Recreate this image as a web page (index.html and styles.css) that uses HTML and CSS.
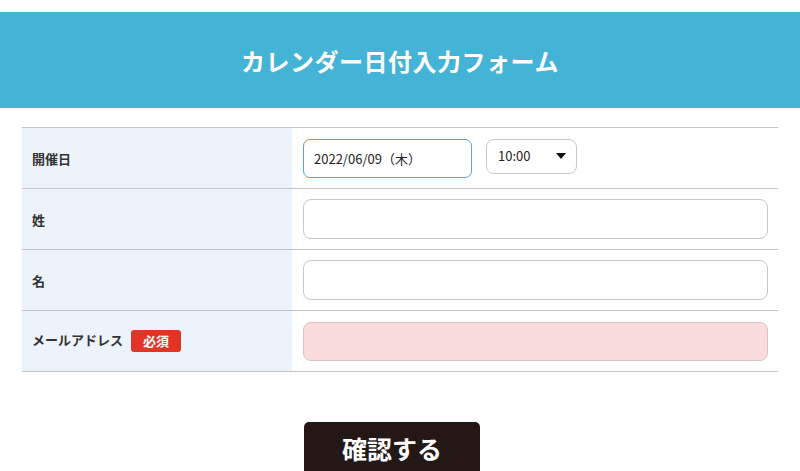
FILE: index.html
```html
<!DOCTYPE html>
<html lang="ja">
<head>
  <meta charset="UTF-8" />
  <title>カレンダー日付入力フォーム</title>
  <link rel="stylesheet" href="styles.css">
</head>
<body>
  <header class="page-header">
    <h1>カレンダー日付入力フォーム</h1>
  </header>

  <form class="form">
    <table class="form-table">
      <tr>
        <th>開催日</th>
        <td>
          <div class="date-row">
            <input type="text" class="date-input" value="2022/06/09（木）" />
            <div class="time-select">
              <span>10:00</span>
              <span class="arrow"></span>
            </div>
          </div>
        </td>
      </tr>
      <tr>
        <th>姓</th>
        <td><input type="text" class="text-input" /></td>
      </tr>
      <tr>
        <th>名</th>
        <td><input type="text" class="text-input" /></td>
      </tr>
      <tr>
        <th>メールアドレス<span class="required">必須</span></th>
        <td><input type="text" class="text-input is-error" /></td>
      </tr>
    </table>

    <div class="actions">
      <button type="button" class="submit">確認する</button>
    </div>
  </form>
</body>
</html>
```

FILE: styles.css
```css
body {
  margin: 0;
  padding-top: 12px;
  font-family: "Noto Sans CJK JP", "Liberation Sans", sans-serif;
  color: #333;
  background: #fff;
}

.page-header {
  background: #43b4d5;
  height: 96px;
  display: flex;
  align-items: center;
  justify-content: center;
}

.page-header h1 {
  margin: 0;
  color: #fff;
  font-size: 24px;
  font-weight: bold;
  letter-spacing: 0.5px;
}

.form {
  padding: 19px 22px 0;
}

.form-table {
  width: 100%;
  border-collapse: collapse;
  border-top: 1px solid #c4c4c4;
}

.form-table tr {
  border-bottom: 1px solid #c4c4c4;
}

.form-table th {
  width: 270px;
  height: 61px;
  padding: 0 0 0 10px;
  box-sizing: border-box;
  background: #edf3fa;
  text-align: left;
  font-size: 13px;
  font-weight: bold;
  color: #333;
  vertical-align: middle;
}

.form-table td {
  padding: 0 10px 0 11px;
  vertical-align: middle;
}

.date-row {
  display: flex;
  align-items: flex-start;
  gap: 14px;
}

.date-input {
  width: 169px;
  height: 39px;
  box-sizing: border-box;
  border: 1px solid #5aa3db;
  border-radius: 7px;
  padding: 0 10px;
  font-family: "Noto Sans CJK JP", "Liberation Sans", sans-serif;
  font-size: 13px;
  color: #222;
}

.time-select {
  width: 91px;
  height: 35px;
  box-sizing: border-box;
  border: 1px solid #c8c8c8;
  border-radius: 8px;
  display: flex;
  align-items: center;
  justify-content: space-between;
  padding: 0 10px 2px 11px;
  font-size: 13px;
  color: #222;
}

.arrow {
  width: 0;
  height: 0;
  border-left: 5px solid transparent;
  border-right: 5px solid transparent;
  border-top: 6px solid #111;
  margin-top: 2px;
}

.text-input {
  display: block;
  width: 100%;
  height: 40px;
  box-sizing: border-box;
  border: 1px solid #c8c8c8;
  border-radius: 8px;
  background: #fff;
}

.text-input.is-error {
  height: 39px;
  background: #fadcdd;
  border-color: #d8c4c4;
}

.required {
  display: inline-block;
  margin-left: 8px;
  padding: 0 12px;
  height: 22px;
  line-height: 22px;
  background: #e23425;
  color: #fff;
  font-size: 13px;
  border-radius: 3px;
  vertical-align: middle;
}

.actions {
  display: flex;
  justify-content: center;
  padding-top: 50px;
}

.submit {
  width: 176px;
  height: 60px;
  margin-left: -16px;
  border: none;
  border-radius: 5px;
  background: #231815;
  color: #fff;
  font-family: "Noto Sans CJK JP", "Liberation Sans", sans-serif;
  font-size: 25px;
  font-weight: bold;
  padding-bottom: 10px;
}
```
